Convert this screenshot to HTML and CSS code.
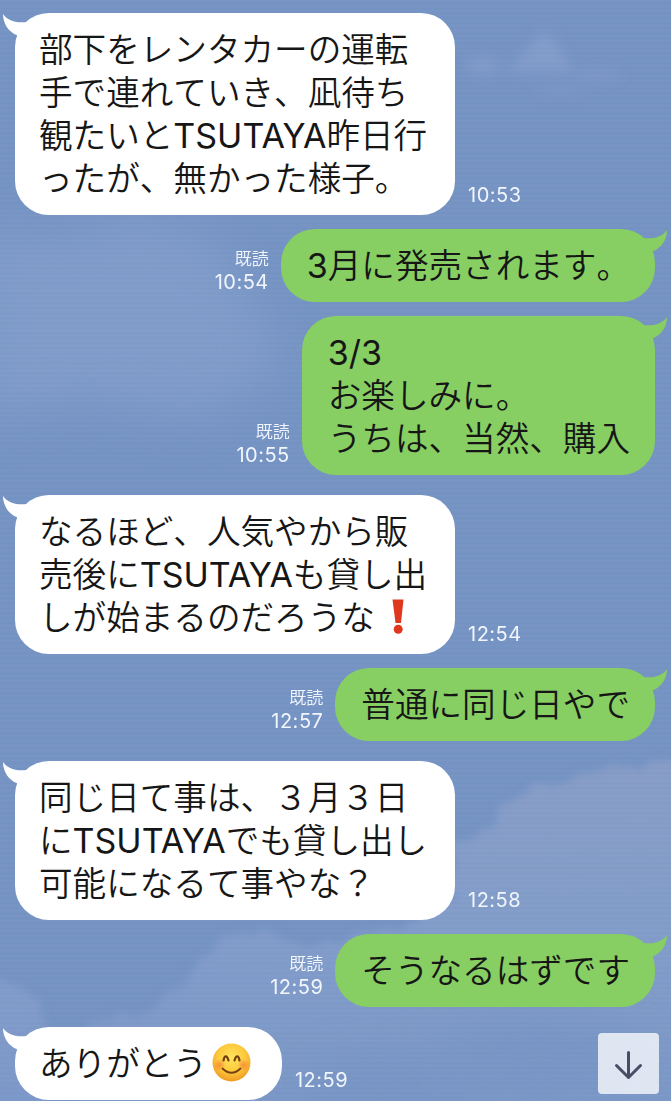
FILE: index.html
```html
<!DOCTYPE html>
<html lang="ja">
<head>
	<meta charset="UTF-8">
	<title>トーク</title>
	<link rel="stylesheet" href="styles.css">
</head>

<body>

<svg class="sky" viewBox="0 0 671 1101" aria-hidden="true">
	<defs>
		<filter id="edge" x="-20%" y="-20%" width="140%" height="140%">
			<feTurbulence type="fractalNoise" baseFrequency="0.04" numOctaves="4" seed="7" result="n" />
			<feDisplacementMap in="SourceGraphic" in2="n" scale="26" xChannelSelector="R" yChannelSelector="G" />
			<feGaussianBlur stdDeviation="4" />
		</filter>
		<filter id="soft" x="-50%" y="-50%" width="200%" height="200%">
			<feGaussianBlur stdDeviation="24" />
		</filter>
		<filter id="wisp" x="-50%" y="-50%" width="200%" height="200%">
			<feGaussianBlur stdDeviation="6" />
		</filter>
		<linearGradient id="fade" gradientUnits="userSpaceOnUse" x1="0" y1="760" x2="0" y2="1101">
			<stop offset="0" stop-color="#899ec8" />
			<stop offset="0.5" stop-color="#849dca" />
			<stop offset="1" stop-color="#7c98c8" />
		</linearGradient>
		<pattern id="grain" width="671" height="5" patternUnits="userSpaceOnUse">
			<path d="M0 0.500H671" stroke="#fff" stroke-opacity="0.025" />
			<path d="M0 3.500H671" stroke="#2b4f90" stroke-opacity="0.02" />
		</pattern>
	</defs>
	<!-- 上の薄い雲 -->
	<g filter="url(#soft)" fill="#86a1cd" opacity="0.65">
		<path d="M-20 225L60 240L130 215L210 235L265 320L285 370L200 420L80 400L-20 420Z" />
	</g>
	<g filter="url(#wisp)" fill="#8ca2cf">
		<path d="M508 72L530 45L545 30L560 50L574 72Z" opacity="0.6" />
		<ellipse cx="483" cy="66" rx="17" ry="9" opacity="0.5" />
		<ellipse cx="598" cy="75" rx="24" ry="5" opacity="0.4" />
		<ellipse cx="560" cy="90" rx="24" ry="4" opacity="0.3" />
	</g>
	<!-- 下の大きい雲 -->
	<g filter="url(#edge)" fill="url(#fade)">
		<path d="M450 846L485 832L500 812L520 798L530 786L555 784L590 772L630 766L700 758V1140H80V1032L105 1017L145 1012L175 988L200 962L222 938L245 931L275 930L300 948L400 930L450 900Z" opacity="0.92" />
		<path d="M-20 975L15 988L38 1005L46 1035V1140H-20Z" />
	</g>
	<g filter="url(#soft)" fill="#7493c3" opacity="0.8">
		<ellipse cx="540" cy="1050" rx="100" ry="26" />
		<ellipse cx="380" cy="1085" rx="80" ry="20" />
	</g>
	<rect width="671" height="1101" fill="url(#grain)" />
</svg>

<svg class="defs" aria-hidden="true">
	<symbol id="tail" viewBox="0 0 30 24"><path d="M0 0C4 6 12 9.500 24 8L30 10L18 24L13.500 21C6 18 0 10 0 0Z" /></symbol>
</svg>

<div class="talk">
	<div class="row you">
		<div class="bubble long">
			<svg class="tail"><use href="#tail" /></svg>
			<p>部下をレンタカーの運転<br>手で連れていき、凪待ち<br>観たいと<span class="en">TSUTAYA</span>昨日行<br>ったが、無かった様子。</p>
		</div>
		<div class="info"><span class="time">10:53</span></div>
	</div>
	<div class="row me">
		<div class="info"><span class="read">既読</span><span class="time">10:54</span></div>
		<div class="bubble">
			<svg class="tail"><use href="#tail" /></svg>
			<p><span class="en">3</span>月に発売されます。</p>
		</div>
	</div>
	<div class="row me">
		<div class="info"><span class="read">既読</span><span class="time">10:55</span></div>
		<div class="bubble">
			<svg class="tail"><use href="#tail" /></svg>
			<p><span class="en">3/3</span><br>お楽しみに。<br>うちは、当然、購入</p>
		</div>
	</div>
	<div class="row you turn">
		<div class="bubble long">
			<svg class="tail"><use href="#tail" /></svg>
			<p>なるほど、人気やから販<br>売後に<span class="en">TSUTAYA</span>も貸し出<br>しが始まるのだろうな<svg class="emoji" viewBox="0 0 39 39" role="img" aria-label="❗"><path d="M12.500 2.500H23.500L21 26H15.500Z" fill="#e0381d" /><circle cx="18.200" cy="32.300" r="4.500" fill="#e0381d" /></svg></p>
		</div>
		<div class="info"><span class="time">12:54</span></div>
	</div>
	<div class="row me">
		<div class="info"><span class="read">既読</span><span class="time">12:57</span></div>
		<div class="bubble">
			<svg class="tail"><use href="#tail" /></svg>
			<p>普通に同じ日やで</p>
		</div>
	</div>
	<div class="row you turn">
		<div class="bubble long">
			<svg class="tail"><use href="#tail" /></svg>
			<p>同じ日て事は、３月３日<br>に<span class="en">TSUTAYA</span>でも貸し出し<br>可能になるて事やな？</p>
		</div>
		<div class="info"><span class="time">12:58</span></div>
	</div>
	<div class="row me">
		<div class="info"><span class="read">既読</span><span class="time">12:59</span></div>
		<div class="bubble">
			<svg class="tail"><use href="#tail" /></svg>
			<p>そうなるはずです</p>
		</div>
	</div>
	<div class="row you turn">
		<div class="bubble">
			<svg class="tail"><use href="#tail" /></svg>
			<p>ありがとう<svg class="emoji" viewBox="0 0 39 39" role="img" aria-label="😊">
				<defs>
					<radialGradient id="face" cx="0.5" cy="0.38" r="0.62">
						<stop offset="0" stop-color="#ffe45c" />
						<stop offset="0.6" stop-color="#fdc93c" />
						<stop offset="1" stop-color="#f09a24" />
					</radialGradient>
					<radialGradient id="cheek">
						<stop offset="0" stop-color="#f5703a" stop-opacity="0.65" />
						<stop offset="1" stop-color="#f5703a" stop-opacity="0" />
					</radialGradient>
				</defs>
				<circle cx="19.500" cy="19.500" r="19" fill="url(#face)" />
				<circle cx="7.500" cy="22" r="6" fill="url(#cheek)" />
				<circle cx="31.500" cy="22" r="6" fill="url(#cheek)" />
				<path d="M11.500 17.500C12.500 12 15 12 16.500 17.500M22.500 17.500C24 12 26.500 12 27.500 17.500" fill="none" stroke="#754012" stroke-width="2.200" stroke-linecap="round" />
				<path d="M10.500 25.500Q19.500 34 28.500 25.500" fill="none" stroke="#754012" stroke-width="1.800" stroke-linecap="round" />
			</svg></p>
		</div>
		<div class="info"><span class="time">12:59</span></div>
	</div>
</div>

<button class="down" type="button" aria-label="下へ">
	<svg viewBox="0 0 61 61"><path d="M30.500 19.500V44M18.500 32.500L30.500 44.500L42.500 32.500" /></svg>
</button>

</body>
</html>
```
FILE: styles.css
```css
*{ margin: 0; padding: 0; box-sizing: border-box;}
body{ width: 671px; height: 1101px; overflow: hidden; position: relative; background: #7593c3; font-family: "Inter", "Noto Sans CJK JP", sans-serif; color: #161616;}

/* 背景の空 */
.sky{ position: absolute; left: 0; top: 0; width: 671px; height: 1101px;}
.defs{ position: absolute; width: 0; height: 0;}

.talk{ position: relative; display: flex; flex-direction: column; gap: 14px; padding: 13px 16px 0 15px;}
.row{ display: flex; align-items: flex-end;}
.me{ justify-content: flex-end;}
.turn{ margin-top: 6px;}

/* 吹き出し */
.bubble{ position: relative; padding: 15px 31px 15px 24px; border-radius: 34px; background: #fff;}
.bubble p{ font-size: 33.6px; font-weight: 350; line-height: 43px; font-kerning: none; white-space: nowrap;}
.en{ font-size: 34px; font-weight: 400; font-kerning: normal;}
.long{ width: 440px;}
.me .bubble{ padding: 15px 25px 15px 26px; background: #87ce63;}
.tail{ position: absolute; left: -12px; top: 1px; width: 30px; height: 24px; fill: #fff;}
.me .tail{ left: auto; right: -12px; fill: #87ce63; transform: scaleX(-1);}
.emoji{ width: 39px; height: 39px; margin: -10px 0 -10px 5px; vertical-align: 4px;}

/* 既読と時刻 */
.info{ display: flex; flex-direction: column; padding: 0 12px 8px 13px; line-height: 23px; color: #f1f5fc;}
.me .info{ align-items: flex-end;}
.read{ font-size: 17px; font-weight: 350;}
.time{ font-size: 20px; letter-spacing: 0.5px;}

.down{ position: absolute; left: 598px; top: 1033px; width: 61px; height: 61px; border: none; border-radius: 4px; background: rgba(238,241,248,0.87);}
.down svg{ display: block; width: 61px; height: 61px; fill: none; stroke: #474d66; stroke-width: 3; stroke-linecap: round; stroke-linejoin: round;}
```
